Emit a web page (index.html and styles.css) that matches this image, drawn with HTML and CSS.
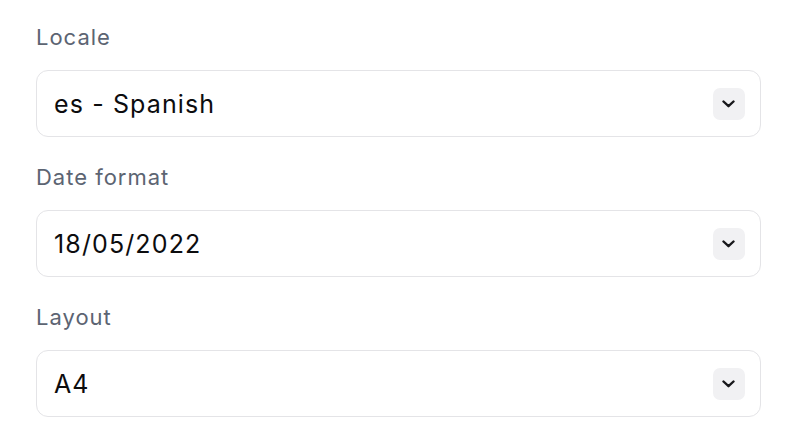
FILE: index.html
```html
<!DOCTYPE html>
<html lang="en">
<head>
<meta charset="utf-8">
<title>Settings</title>
<link rel="stylesheet" href="styles.css">
</head>
<body>
<div class="form">
  <div class="field">
    <div class="label">Locale</div>
    <div class="select">
      <span class="value">es - Spanish</span>
      <span class="btn"><svg width="13" height="8" viewBox="0 0 13 8"><path d="M1.5 1.5 L6.5 6.2 L11.5 1.5" fill="none" stroke="#18181b" stroke-width="2.4" stroke-linecap="round" stroke-linejoin="round"/></svg></span>
    </div>
  </div>
  <div class="field">
    <div class="label">Date format</div>
    <div class="select">
      <span class="value">18/05/2022</span>
      <span class="btn"><svg width="13" height="8" viewBox="0 0 13 8"><path d="M1.5 1.5 L6.5 6.2 L11.5 1.5" fill="none" stroke="#18181b" stroke-width="2.4" stroke-linecap="round" stroke-linejoin="round"/></svg></span>
    </div>
  </div>
  <div class="field">
    <div class="label">Layout</div>
    <div class="select">
      <span class="value">A4</span>
      <span class="btn"><svg width="13" height="8" viewBox="0 0 13 8"><path d="M1.5 1.5 L6.5 6.2 L11.5 1.5" fill="none" stroke="#18181b" stroke-width="2.4" stroke-linecap="round" stroke-linejoin="round"/></svg></span>
    </div>
  </div>
</div>
</body>
</html>
```
FILE: styles.css
```css
html, body {
  margin: 0;
  padding: 0;
  background: #ffffff;
}
body {
  font-family: Inter, "Noto Sans", sans-serif;
}
.form {
  width: 725px;
  padding: 22px 0 0 36px;
  display: flex;
  flex-direction: column;
  gap: 25px;
}
.field {
  display: flex;
  flex-direction: column;
}
.label {
  font-size: 22px;
  line-height: 30px;
  letter-spacing: 0.045em;
  color: #5c6472;
  margin-bottom: 18px;
}
.select {
  box-sizing: border-box;
  height: 67px;
  border: 1.5px solid #e4e4e7;
  border-radius: 12px;
  display: flex;
  align-items: center;
  justify-content: space-between;
  padding: 0 15.5px 0 17px;
}
.value {
  font-size: 25px;
  letter-spacing: 0.045em;
  color: #0c0c0e;
}
.btn {
  width: 32px;
  height: 32px;
  border-radius: 7px;
  background: #f1f1f3;
  display: flex;
  align-items: center;
  justify-content: center;
}
```
